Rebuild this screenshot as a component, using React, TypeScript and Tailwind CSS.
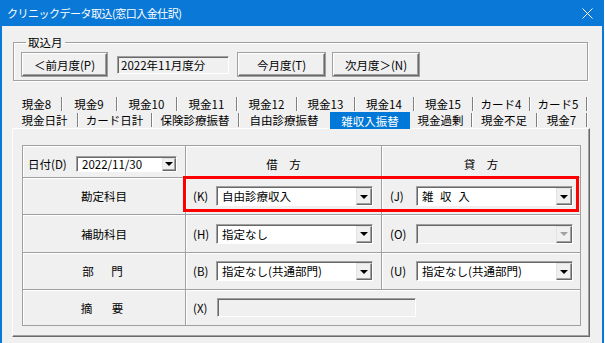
import React from 'react';

type Tab = { label: string; w: string; active?: boolean; sep?: boolean };

const tabsBack: Tab[] = [
  { label: '現金8', w: 'w-[50px]', sep: true },
  { label: '現金9', w: 'w-[55px]', sep: true },
  { label: '現金10', w: 'w-[60px]', sep: true },
  { label: '現金11', w: 'w-[60px]', sep: true },
  { label: '現金12', w: 'w-[60px]', sep: true },
  { label: '現金13', w: 'w-[58px]', sep: true },
  { label: '現金14', w: 'w-[59px]', sep: true },
  { label: '現金15', w: 'w-[59px]', sep: true },
  { label: 'カード4', w: 'w-[57px]', sep: true },
  { label: 'カード5', w: 'w-[57px]', sep: true },
];

const tabsFront: Tab[] = [
  { label: '現金日計', w: 'w-[66px]', sep: true },
  { label: 'カード日計', w: 'w-[74px]', sep: true },
  { label: '保険診療振替', w: 'w-[87px]', sep: true },
  { label: '自由診療振替', w: 'w-[90px]' },
  { label: '雑収入振替', w: 'w-[81px]', active: true },
  { label: '現金過剰', w: 'w-[62px]', sep: true },
  { label: '現金不足', w: 'w-[65px]', sep: true },
  { label: '現金7', w: 'w-[50px]', sep: true },
];

const TabRow = ({ tabs }: { tabs: Tab[] }) => (
  <div className="flex h-[16px]">
    {tabs.map((t) => (
      <div key={t.label} className={`flex h-full items-center ${t.w}`}>
        {t.active ? (
          <div className="relative z-10 ml-px flex h-[17px] flex-1 items-center justify-center self-start bg-[#0078d7] text-white">
            {t.label}
          </div>
        ) : (
          <div className="flex h-full flex-1 items-center justify-center">{t.label}</div>
        )}
        {t.sep && <div className="h-[14px] w-px bg-[#808080] shadow-[1px_0_0_#fff]" />}
      </div>
    ))}
  </div>
);

const winButton =
  'flex items-center justify-center bg-[#f0f0f0] border border-t-white border-l-white border-r-[#696969] border-b-[#696969] shadow-[inset_-1px_-1px_0_#a0a0a0,0_0_0_1px_#a0a0a0]';

const sunken =
  'border border-t-[#a0a0a0] border-l-[#a0a0a0] border-r-white border-b-white shadow-[inset_1px_1px_0_#696969]';

const Combo = ({
  w,
  h,
  text,
  disabled,
  btn = 'w-[16px]',
  textClass = '',
}: {
  w: string;
  h: string;
  text?: string;
  disabled?: boolean;
  btn?: string;
  textClass?: string;
}) => (
  <div className={`flex ${w} ${h} ${sunken} ${disabled ? 'bg-[#f0f0f0]' : 'bg-white'}`}>
    <span className={`flex flex-1 items-center overflow-hidden whitespace-nowrap pl-[5px] ${textClass}`}>{text}</span>
    <div
      className={`mt-px flex ${btn} items-center justify-center border border-t-[#e3e3e3] border-l-[#e3e3e3] border-r-[#696969] border-b-[#696969] bg-[#f0f0f0] shadow-[inset_-1px_-1px_0_#a0a0a0]`}
    >
      <div
        className={`h-0 w-0 border-x-[4px] border-t-[4px] border-x-transparent ${
          disabled ? 'border-t-[#a0a0a0]' : 'border-t-black'
        }`}
      />
    </div>
  </div>
);

const cell = 'border-r border-b border-[#a0a0a0] shadow-[inset_1px_1px_0_#fff]';

const FieldRow = ({ tag, tagW, children }: { tag: string; tagW: string; children: React.ReactNode }) => (
  <div className="flex items-center">
    <span className={tagW}>{tag}</span>
    {children}
  </div>
);

export default function App() {
  return (
    <div className="h-[343px] w-[605px] overflow-hidden bg-white font-['Noto_Sans_CJK_JP',sans-serif] text-[11.5px] leading-[14px] text-black">
      <div className="flex h-[343px] w-[604px] flex-col border-x-2 border-[#0a78d7] bg-[#f0f0f0]">
        {/* Title bar */}
        <div className="flex h-[26px] shrink-0 items-center bg-[#0a78d7] pl-[5px] text-[11px] tracking-[-0.5px] text-white">
          <span>クリニックデータ取込(窓口入金仕訳)</span>
          <svg className="ml-auto mr-[9px]" width="11" height="11" viewBox="0 0 11 11">
            <path d="M0.5 0.5 L10.5 10.5 M10.5 0.5 L0.5 10.5" stroke="#fff" strokeWidth="1" />
          </svg>
        </div>

        {/* 取込月 */}
        <fieldset className="ml-[11px] mt-[9px] w-[575px] border border-[#a0a0a0] pb-[4px] pl-[8px] shadow-[inset_1px_1px_0_#fff,1px_1px_0_#fff]">
          <legend className="ml-[4px] px-[2px] leading-[14px]">取込月</legend>
          <div className="flex items-center pt-[4px]">
            <button className={`h-[23px] w-[85px] ${winButton}`}>＜前月度(P)</button>
            <div className={`ml-[10px] flex h-[18px] w-[112px] items-center bg-[#f0f0f0] pl-[3px] ${sunken}`}>
              2022年11月度分
            </div>
            <button className={`ml-[9px] h-[23px] w-[87px] ${winButton}`}>今月度(T)</button>
            <button className={`ml-[8px] h-[23px] w-[86px] ${winButton}`}>次月度＞(N)</button>
          </div>
        </fieldset>

        {/* Tabs */}
        <div className="ml-[10px] mt-[15px] flex flex-col">
          <TabRow tabs={tabsBack} />
          <TabRow tabs={tabsFront} />

          <div className="h-[209px] w-[578px] border border-t-white border-l-white border-r-[#696969] border-b-[#696969] pl-[9px] pt-[16px] shadow-[inset_-1px_-1px_0_#a0a0a0]">
            <div className="relative w-[559px]">
              <div className="grid grid-cols-[163px_196px_199px] grid-rows-[32px_37px_38px_37px_36px] border-l border-t border-[#a0a0a0]">
                {/* header row */}
                <div className={`${cell} flex items-center pl-[5px] pt-[4px]`}>
                  <span className="w-[48px]">日付(D)</span>
                  <Combo w="w-[101px]" h="h-[16px]" text="2022/11/30" btn="w-[14px]" textClass="pl-[3px]" />
                </div>
                <div className={`${cell} flex items-center justify-center pt-[4px]`}>借　方</div>
                <div className={`${cell} flex items-center justify-center pt-[4px]`}>貸　方</div>

                {/* 勘定科目 */}
                <div className={`${cell} flex items-center justify-center`}>勘定科目</div>
                <div className={`${cell} flex items-center pl-[7px]`}>
                  <FieldRow tag="(K)" tagW="w-[23px]">
                    <Combo w="w-[157px]" h="h-[20px]" text="自由診療収入" />
                  </FieldRow>
                </div>
                <div className={`${cell} flex items-center pl-[8px]`}>
                  <FieldRow tag="(J)" tagW="w-[26px]">
                    <Combo w="w-[157px]" h="h-[20px]" text="雑 収 入" textClass="pl-[3px] tracking-[2px]" />
                  </FieldRow>
                </div>

                {/* 補助科目 */}
                <div className={`${cell} flex items-center justify-center`}>補助科目</div>
                <div className={`${cell} flex items-center pl-[7px]`}>
                  <FieldRow tag="(H)" tagW="w-[23px]">
                    <Combo w="w-[157px]" h="h-[20px]" text="指定なし" />
                  </FieldRow>
                </div>
                <div className={`${cell} flex items-center pl-[8px]`}>
                  <FieldRow tag="(O)" tagW="w-[26px]">
                    <Combo w="w-[157px]" h="h-[20px]" disabled />
                  </FieldRow>
                </div>

                {/* 部門 */}
                <div className={`${cell} flex items-center justify-center tracking-[3px]`}>部　門</div>
                <div className={`${cell} flex items-center pl-[7px]`}>
                  <FieldRow tag="(B)" tagW="w-[23px]">
                    <Combo w="w-[157px]" h="h-[20px]" text="指定なし(共通部門)" />
                  </FieldRow>
                </div>
                <div className={`${cell} flex items-center pl-[8px]`}>
                  <FieldRow tag="(U)" tagW="w-[26px]">
                    <Combo w="w-[157px]" h="h-[20px]" text="指定なし(共通部門)" />
                  </FieldRow>
                </div>

                {/* 摘要 */}
                <div className={`${cell} flex items-center justify-center tracking-[4px]`}>摘　要</div>
                <div className={`${cell} col-span-2 flex items-center pl-[7px]`}>
                  <span className="w-[24px]">(X)</span>
                  <div className={`h-[19px] w-[199px] bg-[#f0f0f0] ${sunken}`} />
                </div>
              </div>

              {/* highlight annotation */}
              <div className="pointer-events-none absolute left-[161px] top-[31px] h-[36px] w-[396px] border-[3px] border-[#ff0000]" />
            </div>
          </div>
        </div>
      </div>
    </div>
  );
}
